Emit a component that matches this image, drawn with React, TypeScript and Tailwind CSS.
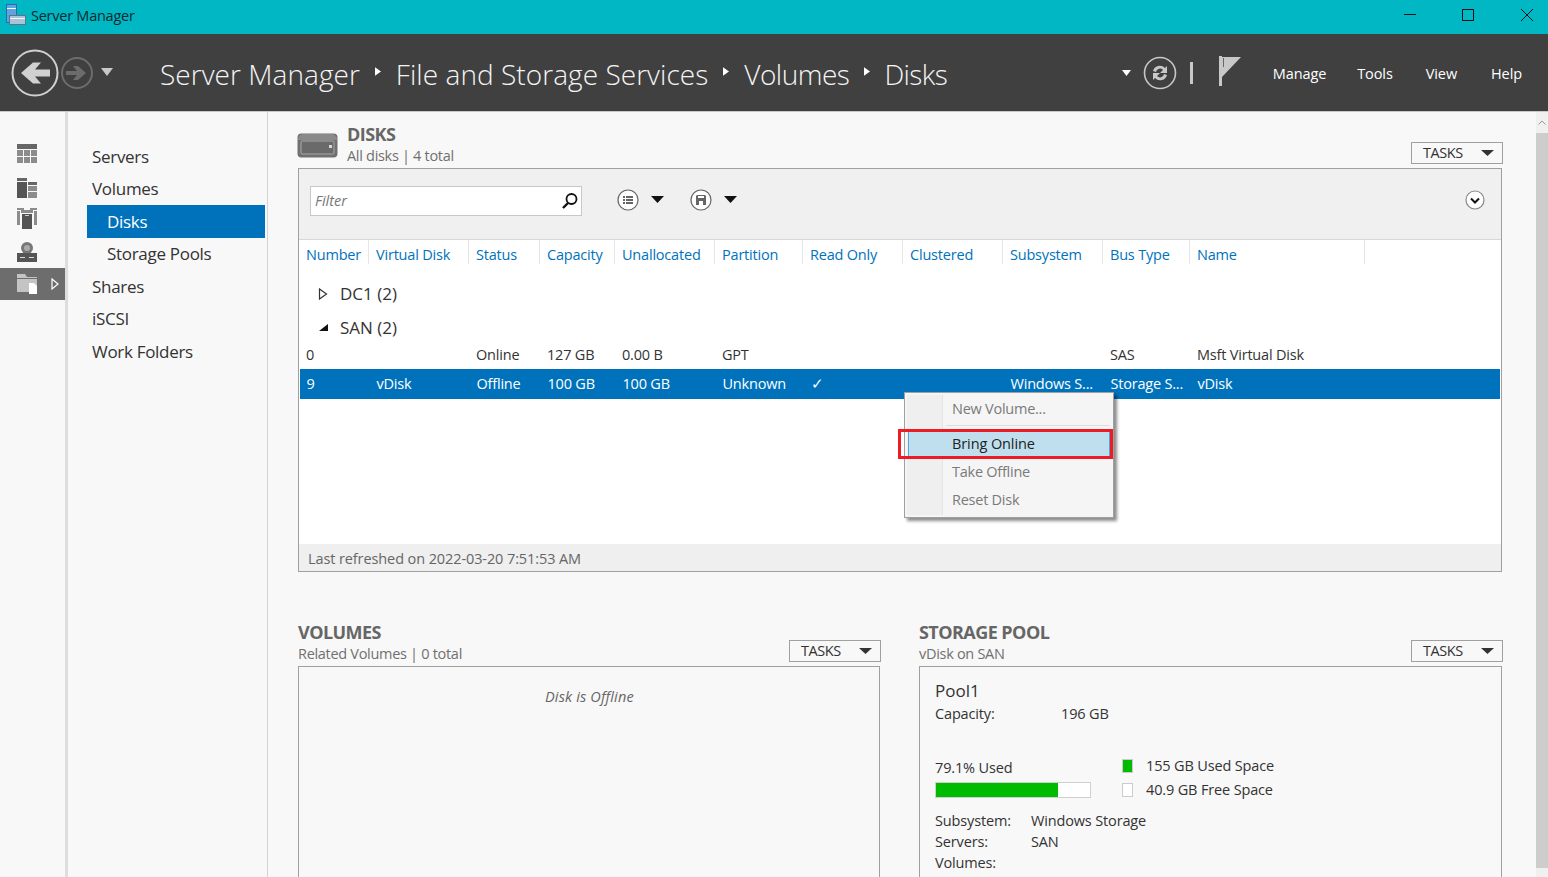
import React from "react";

const font = { fontFamily: '"Open Sans","Noto Sans",sans-serif' };

function Tri({ className = "", w = 13, h = 6 }: { className?: string; w?: number; h?: number }) {
  return (
    <svg width={w} height={h} viewBox="0 0 14 8" preserveAspectRatio="none" className={className}>
      <path d="M0 0h14L7 8z" fill="currentColor" />
    </svg>
  );
}

function Tasks() {
  return (
    <div className="flex items-center justify-between w-[92px] h-[22px] border border-[#a0a0a0] pl-[11px] pr-[8px] text-[14.5px] tracking-[-0.45px] text-[#333333]">
      <span>TASKS</span>
      <Tri className="text-[#333333]" />
    </div>
  );
}

function SectionHead({ title, sub, icon }: { title: string; sub: string; icon?: boolean }) {
  return (
    <div className="flex items-end justify-between h-[44px]">
      <div className="flex items-start h-full">
        {icon && (
          <svg width="41" height="26" viewBox="0 0 41 26" className="mt-[9px] mr-[9px] -ml-px">
            <rect x="0.5" y="0.5" width="40" height="24" rx="4" fill="#707070" />
            <path d="M1 7c0-3 2-6 5-6h29c3 0 5 3 5 6z" fill="#8a8a8a" />
            <rect x="4" y="8" width="33" height="13" rx="1" fill="#6a6a6a" stroke="#a8a8a8" />
            <rect x="32" y="12" width="3" height="3" fill="#d8d8d8" />
          </svg>
        )}
        <div className="flex flex-col">
          <div className="text-[18px] leading-[21px] font-bold tracking-[-0.55px] text-[#666666]">{title}</div>
          <div className="text-[14.5px] leading-[21px] tracking-[-0.3px] text-[#707070]">{sub}</div>
        </div>
      </div>
      <div className="mb-[4px] -mr-[1px]">
        <Tasks />
      </div>
    </div>
  );
}

const cols = "grid grid-cols-[70px_100px_71px_75px_100px_88px_100px_100px_100px_87px_175px]";
const headers = ["Number", "Virtual Disk", "Status", "Capacity", "Unallocated", "Partition", "Read Only", "Clustered", "Subsystem", "Bus Type", "Name"];
const row0 = ["0", "", "Online", "127 GB", "0.00 B", "GPT", "", "", "", "SAS", "Msft Virtual Disk"];
const row9 = ["9", "vDisk", "Offline", "100 GB", "100 GB", "Unknown", "✓", "", "Windows S...", "Storage S...", "vDisk"];

function NavRail() {
  const c = "#666666";
  return (
    <div className="w-[65px] shrink-0 pt-[32px] flex flex-col items-stretch">
      <div className="h-[34px] flex items-start pl-[17px]">
        <svg width="20" height="20" viewBox="0 0 20 20">
          <rect width="20" height="5" fill={c} />
          <path d="M0 6h6v6H0zM7 6h6v6H7zM14 6h6v6h-6zM0 13h6v6H0zM7 13h6v6H7zM14 13h6v6h-6z" fill="#8c8c8c" />
        </svg>
      </div>
      <div className="h-[30px] flex items-start pl-[17px]">
        <svg width="20" height="20" viewBox="0 0 20 20">
          <rect y="0" width="10" height="3" fill={c} />
          <rect y="4" width="10" height="16" fill="#555555" />
          <rect x="11" y="4" width="9" height="3" fill={c} />
          <path d="M11 8h9v5h-9zM11 14h9v6h-9z" fill="#8c8c8c" />
        </svg>
      </div>
      <div className="h-[34px] flex items-start pl-[17px]">
        <svg width="20" height="21" viewBox="0 0 20 21">
          <path d="M0 3h3v14H0zM17 3h3v14h-3zM0 0h7v2H0zM13 0h7v2h-7z" fill="#8c8c8c" />
          <rect x="4" y="2" width="12" height="3" fill="#8c8c8c" />
          <rect x="5" y="6" width="10" height="15" fill="#555555" />
          <rect x="8" y="7" width="4" height="1" fill="#cccccc" />
        </svg>
      </div>
      <div className="h-[26px] flex items-start pl-[17px]">
        <svg width="20" height="20" viewBox="0 0 20 20">
          <circle cx="10" cy="6" r="6" fill="#777777" />
          <circle cx="10" cy="6" r="3" fill="#aaaaaa" />
          <rect y="11" width="20" height="9" fill="#555555" />
          <path d="M3 15h5v1H3zM12 15h5v1h-5z" fill="#dddddd" />
        </svg>
      </div>
      <div className="h-[32px] bg-[#6d6d6d] flex items-center pl-[17px] justify-between pr-[6px]">
        <svg width="20" height="20" viewBox="0 0 20 20">
          <path d="M0 0h8l2 3h10v15H0z" fill="#c4c4c4" />
          <path d="M0 4h20v1H0z" fill="#6d6d6d" />
          <path d="M12 9h5l3 3v8h-8z" fill="#ffffff" />
        </svg>
        <svg width="8" height="12" viewBox="0 0 8 12">
          <path d="M1 1l6 5-6 5z" fill="none" stroke="#ffffff" strokeWidth="1.2" />
        </svg>
      </div>
    </div>
  );
}

function SubNav() {
  const item = "h-[32.5px] flex items-center text-[17px] tracking-[-0.3px] text-[#333333]";
  return (
    <div className="w-[200px] shrink-0 border-r border-[#d4d4d4] pt-[28px] pl-[19px]">
      <div className={item + " pl-[5px]"}>Servers</div>
      <div className={item + " pl-[5px]"}>Volumes</div>
      <div className={item + " pl-[20px] bg-[#0072bc] text-white w-[178px]"}>Disks</div>
      <div className={item + " pl-[20px]"}>Storage Pools</div>
      <div className={item + " pl-[5px]"}>Shares</div>
      <div className={item + " pl-[5px]"}>iSCSI</div>
      <div className={item + " pl-[5px]"}>Work Folders</div>
    </div>
  );
}

function ContextMenu() {
  return (
    <div className="absolute left-[605px] top-[223px] w-[210px] h-[126px] bg-[#f5f5f5] border border-[#a0a0a0] shadow-[3px_3px_3px_rgba(0,0,0,0.45)] text-[14.5px] tracking-[-0.25px] text-[#7a7a7a]">
      <div className="absolute left-[2px] top-[2px] bottom-[2px] w-[36px] bg-[#efefef] border-r border-[#e4e4e4]" />
      <div className="relative h-[32px] pl-[47px] flex items-center">New Volume...</div>
      <div className="relative ml-[41px] mr-[3px] h-px bg-[#dddddd] mb-[5px]" />
      <div className="relative mx-[3px] h-[26px] bg-[#c0dfee] border-x border-[#4fa8dc] pl-[43px] flex items-center tracking-[-0.1px] text-[#222222]">Bring Online</div>
      <div className="relative h-[28px] pl-[47px] pt-[2px] flex items-center">Take Offline</div>
      <div className="relative h-[28px] pl-[47px] pt-[2px] flex items-center">Reset Disk</div>
      <div className="absolute -left-[7px] top-[36px] w-[215px] h-[30px] border-[3px] border-[#ed1c24]" />
    </div>
  );
}

export default function App() {
  return (
    <div style={font} className="w-[1548px] h-[877px] overflow-hidden flex flex-col bg-[#f8f8f8]">
      <div className="h-[34px] shrink-0 bg-[#00b7c3] flex items-center justify-between">
        <div className="flex items-center pl-[6px]">
          <svg width="20" height="22" viewBox="0 0 20 22" className="-mt-[4px]">
            <rect x="0.5" y="0.5" width="10" height="18" fill="#5da4e0" stroke="#1f6fb5" />
            <rect x="1" y="4" width="9" height="1" fill="#ffffff" />
            <rect x="3.5" y="11.5" width="16" height="9" fill="#a9c4d8" stroke="#5c7488" />
            <rect x="4" y="14" width="15" height="1" fill="#f0f6fa" />
          </svg>
          <span className="ml-[5px] -mt-[3px] text-[14.5px] tracking-[-0.25px] text-[#0a2a30]">Server Manager</span>
        </div>
        <div className="flex items-center -mt-[4px]">
          <svg width="12" height="12" viewBox="0 0 12 12" className="mr-[46px]"><path d="M0 5.5h12" stroke="#111111" /></svg>
          <svg width="12" height="12" viewBox="0 0 12 12" className="mr-[47px]"><rect x="0.5" y="0.5" width="11" height="11" fill="none" stroke="#111111" /></svg>
          <svg width="12" height="12" viewBox="0 0 12 12" className="mr-[15px]"><path d="M0 0l12 12M12 0L0 12" stroke="#111111" /></svg>
        </div>
      </div>

      <div className="h-[78px] shrink-0 bg-[#404040] border-b border-[#c9c9c9] pt-[1px] flex items-center text-white">
        <svg width="48" height="48" viewBox="0 0 48 48" className="ml-[11px]">
          <circle cx="24" cy="24" r="22.5" fill="none" stroke="#cfcfcf" strokeWidth="2" />
          <path d="M39 20.5H24l6-7h-8L10 24l12 10.5h8l-6-7h15z" fill="#d0d0d0" />
        </svg>
        <svg width="32" height="32" viewBox="0 0 32 32" className="ml-[2px]">
          <circle cx="16" cy="16" r="15" fill="none" stroke="#6c6c6c" strokeWidth="2" />
          <path d="M5 14h11l-4-5h5l8 7-8 7h-5l4-5H5z" fill="#6c6c6c" />
        </svg>
        <Tri w={12} h={8} className="ml-[8px] -mt-[2px] text-[#c8c8c8]" />
        <div className="ml-[47px] mt-[2px] flex items-center text-[#f4f4f4] text-[28px] font-light tracking-[0.05px]">
          <span>Server Manager</span>
          <svg width="6" height="9" viewBox="0 0 7 10" className="mx-[15px] -mt-[6px]"><path d="M0 0l7 5-7 5z" fill="#ffffff" /></svg>
          <span>File and Storage Services</span>
          <svg width="6" height="9" viewBox="0 0 7 10" className="mx-[15px] -mt-[6px]"><path d="M0 0l7 5-7 5z" fill="#ffffff" /></svg>
          <span className="tracking-[-0.5px]">Volumes</span>
          <svg width="6" height="9" viewBox="0 0 7 10" className="ml-[15px] mr-[14px] -mt-[6px]"><path d="M0 0l7 5-7 5z" fill="#ffffff" /></svg>
          <span className="tracking-[-0.6px]">Disks</span>
        </div>
        <div className="ml-auto flex items-center text-[14.5px] tracking-[-0.1px] text-white">
          <Tri w={9} h={6} className="text-white" />
          <svg width="34" height="34" viewBox="0 0 34 34" className="ml-[12px]">
            <circle cx="17" cy="17" r="15.5" fill="none" stroke="#c8c8c8" strokeWidth="1.6" />
            <path d="M10 15a7 7 0 0 1 12-3l2-2v7h-7l3-3a4 4 0 0 0-7 2zM24 19a7 7 0 0 1-12 3l-2 2v-7h7l-3 3a4 4 0 0 0 7-2z" fill="#c8c8c8" />
          </svg>
          <div className="ml-[13px] w-[3px] h-[22px] bg-[#c8c8c8]" />
          <svg width="22" height="30" viewBox="0 0 22 30" className="ml-[26px] -mt-[5px]">
            <path d="M0 0h3v30H0z" fill="#c8c8c8" />
            <path d="M3 1h19L3 21z" fill="#c8c8c8" />
            <path d="M4.5 2v9" stroke="#666666" />
          </svg>
          <span className="ml-[32px] mt-[2px]">Manage</span>
          <span className="ml-[31px] mt-[2px]">Tools</span>
          <span className="ml-[33px] mt-[2px]">View</span>
          <span className="ml-[34px] mr-[26px] mt-[2px]">Help</span>
        </div>
      </div>

      <div className="flex-1 flex min-h-0">
        <NavRail />
        <div className="w-[3px] shrink-0 bg-[#dedede]" />
        <SubNav />
        <div className="flex-1 min-w-0 pl-[30px] pr-[34px] pt-[12px]">
          <SectionHead title="DISKS" sub="All disks | 4 total" icon />
          <div className="relative h-[404px] border border-[#a0a0a0] bg-white flex flex-col">
            <div className="h-[71px] shrink-0 bg-[#f0f0f0] border-b border-[#d8d8d8] flex items-start pt-[17px] pl-[11px] pr-[16px] text-[#333333]">
              <div className="w-[272px] h-[30px] bg-white border border-[#c8c8c8] flex items-center justify-between pl-[4px] pr-[2px]">
                <span className="italic text-[14.5px] tracking-[0px] text-[#777777]">Filter</span>
                <svg width="18" height="18" viewBox="0 0 18 18">
                  <circle cx="10.5" cy="7" r="5" fill="none" stroke="#111111" strokeWidth="1.8" />
                  <path d="M7 11l-5 5" stroke="#111111" strokeWidth="2.4" />
                </svg>
              </div>
              <svg width="22" height="22" viewBox="0 0 22 22" className="ml-[35px] mt-[3px]">
                <circle cx="11" cy="11" r="10" fill="#ffffff" stroke="#666666" strokeWidth="1.2" />
                <path d="M6 7h2v2H6zM6 10h2v2H6zM6 13h2v2H6zM9 7h7v2H9zM9 10h7v2H9zM9 13h7v2H9z" fill="#666666" />
              </svg>
              <Tri h={7} className="ml-[12px] mt-[10px] text-[#111111]" />
              <svg width="22" height="22" viewBox="0 0 22 22" className="ml-[26px] mt-[3px]">
                <circle cx="11" cy="11" r="10" fill="#ffffff" stroke="#666666" strokeWidth="1.2" />
                <path d="M7 6h8l1 1v9H6V7z" fill="#666666" />
                <path d="M8 7h6v2H8zM9 12h4v4H9z" fill="#ffffff" />
              </svg>
              <Tri h={7} className="ml-[12px] mt-[10px] text-[#111111]" />
              <svg width="20" height="20" viewBox="0 0 20 20" className="ml-auto mt-[4px]">
                <circle cx="10" cy="10" r="9" fill="#ffffff" stroke="#888888" strokeWidth="1.2" />
                <path d="M6 8.5l4 4 4-4" fill="none" stroke="#111111" strokeWidth="2" />
              </svg>
            </div>

            <div className={cols + " h-[30px] text-[14.5px] tracking-[-0.2px] text-[#0072bc]"}>
              {headers.map((h) => (
                <div key={h} className="flex items-start pl-[7px] pt-[5px] border-r border-[#e6e6e6] h-[24px] leading-[20px] whitespace-nowrap">{h}</div>
              ))}
            </div>

            <div className="flex items-center h-[34px] pl-[19px] mt-[7px] text-[17px] tracking-[0px] text-[#333333]">
              <svg width="10" height="12" viewBox="0 0 10 12"><path d="M1.5 1l7 5-7 5z" fill="#ffffff" stroke="#333333" strokeWidth="1.2" /></svg>
              <span className="ml-[12px]">DC1 (2)</span>
            </div>
            <div className="flex items-center h-[34px] pl-[19px] text-[17px] tracking-[0px] text-[#333333]">
              <svg width="10" height="12" viewBox="0 0 10 12"><path d="M10 2v7H1z" fill="#111111" /></svg>
              <span className="ml-[12px]">SAN (2)</span>
            </div>
            <div className={cols + " h-[24px] items-start leading-[20px] text-[14.5px] tracking-[-0.2px] text-[#333333]"}>
              {row0.map((v, i) => (
                <div key={i} className="pl-[7px] whitespace-nowrap">{v}</div>
              ))}
            </div>
            <div className={cols + " h-[30px] mx-[1px] items-center bg-[#0072bc] text-[14.5px] tracking-[-0.2px] text-white"}>
              {row9.map((v, i) => (
                <div key={i} className="pl-[6.5px] whitespace-nowrap">{v}</div>
              ))}
            </div>
            <div className="flex-1" />
            <div className="h-[27px] shrink-0 bg-[#efefef] pl-[9px] pt-[2px] flex items-center text-[14.5px] tracking-[-0.1px] text-[#666666]">
              Last refreshed on 2022-03-20 7:51:53 AM
            </div>
            <ContextMenu />
          </div>

          <div className="grid grid-cols-[582px_583px] gap-x-[39px] mt-[50px]">
            <div>
              <SectionHead title="VOLUMES" sub="Related Volumes | 0 total" />
              <div className="h-[300px] border border-[#a0a0a0] pt-[19px] pl-[246px] text-[14.5px] italic tracking-[0.15px] text-[#666666]">
                Disk is Offline
              </div>
            </div>
            <div>
              <SectionHead title="STORAGE POOL" sub="vDisk on SAN" />
              <div className="h-[300px] border border-[#a0a0a0] pt-[13px] pl-[15px] text-[14.5px] tracking-[-0.15px] text-[#333333]">
                <div className="text-[17px] leading-[22px] tracking-[0px]">Pool1</div>
                <div className="flex leading-[21px] mt-[1px]">
                  <span className="w-[126px]">Capacity:</span>
                  <span>196 GB</span>
                </div>
                <div className="flex mt-[32px]">
                  <div className="w-[187px]">
                    <div className="leading-[22px] mt-[1px]">79.1% Used</div>
                    <div className="w-[156px] h-[16px] border border-[#d0d0d0] bg-white mt-[3px]">
                      <div className="h-full bg-[#00bb00]" style={{ width: "79.1%" }} />
                    </div>
                  </div>
                  <div className="flex flex-col gap-[4px]">
                    <div className="flex items-center h-[20px]">
                      <div className="w-[11px] h-[14px] bg-[#00bb00] border border-[#cccccc]" />
                      <span className="ml-[13px]">155 GB Used Space</span>
                    </div>
                    <div className="flex items-center h-[20px]">
                      <div className="w-[11px] h-[14px] bg-white border border-[#cccccc]" />
                      <span className="ml-[13px]">40.9 GB Free Space</span>
                    </div>
                  </div>
                </div>
                <div className="grid grid-cols-[96px_1fr] mt-[10px] leading-[21px]">
                  <span>Subsystem:</span><span>Windows Storage</span>
                  <span>Servers:</span><span>SAN</span>
                  <span>Volumes:</span><span></span>
                </div>
              </div>
            </div>
          </div>
        </div>
        <div className="w-[12px] shrink-0 bg-[#f0f0f0] flex flex-col pb-[9px]">
          <div className="h-[21px] flex items-center justify-center">
            <svg width="8" height="5" viewBox="0 0 8 5"><path d="M0.5 4.5L4 1l3.5 3.5" fill="none" stroke="#999999" /></svg>
          </div>
          <div className="flex-1 bg-[#cdcdcd]" />
        </div>
      </div>
    </div>
  );
}
